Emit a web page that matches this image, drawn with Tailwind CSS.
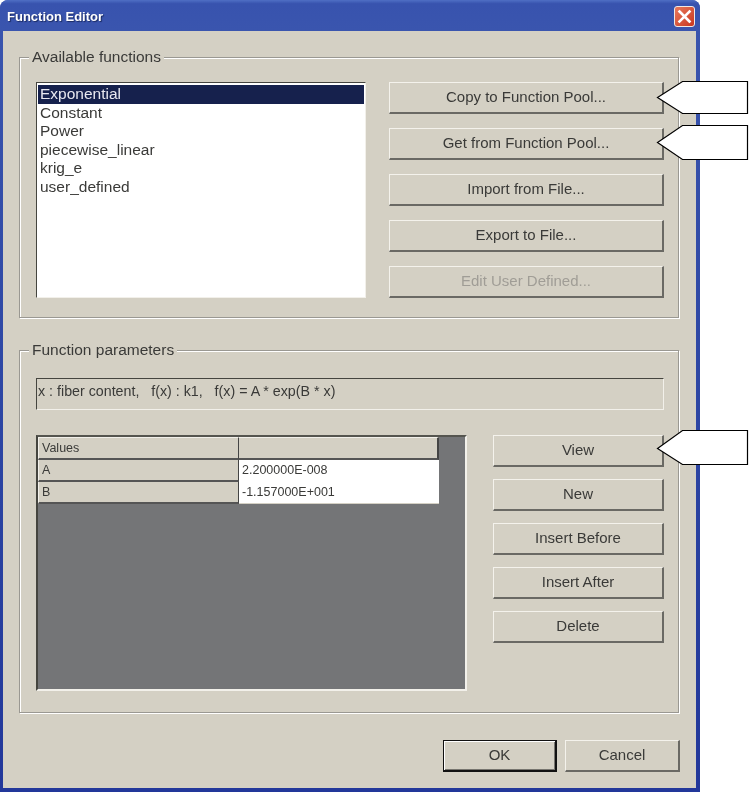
<!DOCTYPE html>
<html lang="en">
<head>
    <meta charset="UTF-8">
    <title>Function Editor</title>
    <script src="https://cdn.jsdelivr.net/npm/@tailwindcss/browser@4"></script>
</head>
<body class="bg-white">
    <div class="relative w-[749px] h-[792px] overflow-hidden font-['Liberation_Sans',Arial,sans-serif] text-[15.5px] text-[#3a3a38]">
        <!-- Window -->
        <div class="flex flex-col w-[700px] h-[792px] rounded-t-[8px] pl-[3px] pr-[4px] pb-[4px] bg-gradient-to-b from-[#3a55ae] to-[#22379a] blur-[0.35px]">
            <!-- Title bar -->
            <div class="flex items-center justify-between h-[31px] -ml-[3px] -mr-[4px] pl-[7px] pr-[5px] pt-[3px] rounded-t-[8px] bg-gradient-to-b from-[#4f6fc4] from-0% via-[#3853ae] via-[12%] to-[#3a55ae]">
                <span class="font-bold text-[13px] text-white [text-shadow:1px_1px_1px_#1a2a60]">Function Editor</span>
                <div class="flex items-center justify-center w-[21px] h-[21px] -mt-[1px] rounded-[3px] border border-[#f0e8e4] bg-gradient-to-br from-[#e8795c] to-[#c9341c]">
                    <svg width="15" height="15" viewBox="0 0 15 15"><path d="M2.5 2.5L12.5 12.5M12.5 2.5L2.5 12.5" stroke="#fff" stroke-width="2.6" stroke-linecap="square"/></svg>
                </div>
            </div>
            <!-- Client area -->
            <div class="flex-1 bg-[#d4d0c4] pl-[16px] pt-[26px]">
                <!-- Available functions -->
                <div class="relative flex w-[660px] h-[261px] border border-[#9a9892] shadow-[inset_1px_1px_0_#fff,1px_1px_0_#fff] pl-[16px] pt-[24px]">
                    <span class="absolute -top-[10px] left-[9px] px-[3px] bg-[#d4d0c4] leading-[18px]">Available functions</span>
                    <div class="w-[330px] h-[216px] bg-white border border-t-[#45453f] border-l-[#45453f] border-r-[#f2f0ea] border-b-[#f2f0ea] leading-[18.4px] pt-[2px] pl-[1px] pr-[1px]">
                        <div class="bg-[#16214d] text-[#e8e8f0] pl-[2px] h-[19px]">Exponential</div>
                        <div class="pl-[2px]">Constant</div>
                        <div class="pl-[2px]">Power</div>
                        <div class="pl-[2px]">piecewise_linear</div>
                        <div class="pl-[2px]">krig_e</div>
                        <div class="pl-[2px]">user_defined</div>
                    </div>
                    <div class="flex flex-col gap-[14px] ml-[23px] text-[15px]">
                        <button class="w-[275px] h-[32px] border border-t-[#f4f2ec] border-l-[#f4f2ec] border-r-2 border-b-2 border-r-[#6a6964] border-b-[#6a6964] text-center">Copy to Function Pool...</button>
                        <button class="w-[275px] h-[32px] border border-t-[#f4f2ec] border-l-[#f4f2ec] border-r-2 border-b-2 border-r-[#6a6964] border-b-[#6a6964] text-center">Get from Function Pool...</button>
                        <button class="w-[275px] h-[32px] border border-t-[#f4f2ec] border-l-[#f4f2ec] border-r-2 border-b-2 border-r-[#6a6964] border-b-[#6a6964] text-center">Import from File...</button>
                        <button class="w-[275px] h-[32px] border border-t-[#f4f2ec] border-l-[#f4f2ec] border-r-2 border-b-2 border-r-[#6a6964] border-b-[#6a6964] text-center">Export to File...</button>
                        <button class="w-[275px] h-[32px] border border-t-[#f4f2ec] border-l-[#f4f2ec] border-r-2 border-b-2 border-r-[#6a6964] border-b-[#6a6964] text-center text-[#a09d96]">Edit User Defined...</button>
                    </div>
                </div>
                <!-- Function parameters -->
                <div class="relative w-[660px] h-[363px] mt-[32px] border border-[#9a9892] shadow-[inset_1px_1px_0_#fff,1px_1px_0_#fff] pl-[16px] pt-[27px]">
                    <span class="absolute -top-[10px] left-[9px] px-[3px] bg-[#d4d0c4] leading-[18px]">Function parameters</span>
                    <div class="w-[628px] h-[32px] border border-t-[#45453f] border-l-[#45453f] border-r-[#f2f0ea] border-b-[#f2f0ea] pl-[1px] pt-[1px] leading-[23px] text-[14.25px]">x : fiber content,&nbsp;&nbsp; f(x) : k1,&nbsp;&nbsp; f(x) = A * exp(B * x)</div>
                    <div class="flex mt-[25px]">
                        <!-- Values grid -->
                        <div class="w-[431px] h-[256px] bg-[#747577] border-2 border-t-[#55554f] border-l-[#45453f] border-r-[#f2f0ea] border-b-[#f2f0ea] text-[12.5px] leading-[21px]">
                            <div class="grid grid-cols-[201px_200px] grid-rows-[23px_22px_22px] w-[401px]">
                                <div class="bg-[#d4d0c4] border-t border-l border-t-[#f2f0ea] border-l-[#f2f0ea] border-r border-r-[#444] border-b-2 border-b-[#555] pl-[3px]">Values</div>
                                <div class="bg-[#d4d0c4] border-t border-t-[#f2f0ea] border-r-2 border-r-[#444] border-b-2 border-b-[#555]"></div>
                                <div class="bg-[#d4d0c4] border-l border-l-[#f2f0ea] border-r border-r-[#444] border-b-2 border-b-[#555] pl-[3px]">A</div>
                                <div class="bg-white pl-[3px]">2.200000E-008</div>
                                <div class="bg-[#d4d0c4] border-l border-l-[#f2f0ea] border-r border-r-[#444] border-b-2 border-b-[#555] pl-[3px]">B</div>
                                <div class="bg-white border-b border-b-[#d4d0c4] pl-[3px]">-1.157000E+001</div>
                            </div>
                        </div>
                        <div class="flex flex-col gap-[12px] ml-[26px] text-[15px]">
                            <button class="w-[171px] h-[32px] pb-[1px] border border-t-[#f4f2ec] border-l-[#f4f2ec] border-r-2 border-b-2 border-r-[#6a6964] border-b-[#6a6964] text-center">View</button>
                            <button class="w-[171px] h-[32px] pb-[1px] border border-t-[#f4f2ec] border-l-[#f4f2ec] border-r-2 border-b-2 border-r-[#6a6964] border-b-[#6a6964] text-center">New</button>
                            <button class="w-[171px] h-[32px] pb-[1px] border border-t-[#f4f2ec] border-l-[#f4f2ec] border-r-2 border-b-2 border-r-[#6a6964] border-b-[#6a6964] text-center">Insert Before</button>
                            <button class="w-[171px] h-[32px] pb-[1px] border border-t-[#f4f2ec] border-l-[#f4f2ec] border-r-2 border-b-2 border-r-[#6a6964] border-b-[#6a6964] text-center">Insert After</button>
                            <button class="w-[171px] h-[32px] pb-[1px] border border-t-[#f4f2ec] border-l-[#f4f2ec] border-r-2 border-b-2 border-r-[#6a6964] border-b-[#6a6964] text-center">Delete</button>
                        </div>
                    </div>
                </div>
                <!-- OK / Cancel -->
                <div class="flex gap-[8px] mt-[27px] ml-[424px] text-[15px]">
                    <button class="w-[114px] h-[32px] border border-[#111] border-r-2 border-b-2 shadow-[inset_1px_1px_0_#fff,inset_-1px_-1px_0_#77756f] text-center">OK</button>
                    <button class="w-[115px] h-[32px] border border-t-[#f4f2ec] border-l-[#f4f2ec] border-r-2 border-b-2 border-r-[#6a6964] border-b-[#6a6964] text-center">Cancel</button>
                </div>
            </div>
        </div>
        <!-- Callout arrows drawn over the screenshot -->
        <svg class="absolute left-[650px] top-[75px]" width="99" height="400" viewBox="0 0 99 400">
            <path d="M7.5 22.5L32.5 6.5H97.5V38.5H32.5Z" fill="#fff" stroke="#000" stroke-width="1.2"/>
            <path d="M7.5 67.5L32.5 50.5H97.5V84.5H32.5Z" fill="#fff" stroke="#000" stroke-width="1.2"/>
            <path d="M7.5 373.5L32.5 355.5H97.5V389.5H32.5Z" fill="#fff" stroke="#000" stroke-width="1.2"/>
        </svg>
    </div>
</body>
</html>
